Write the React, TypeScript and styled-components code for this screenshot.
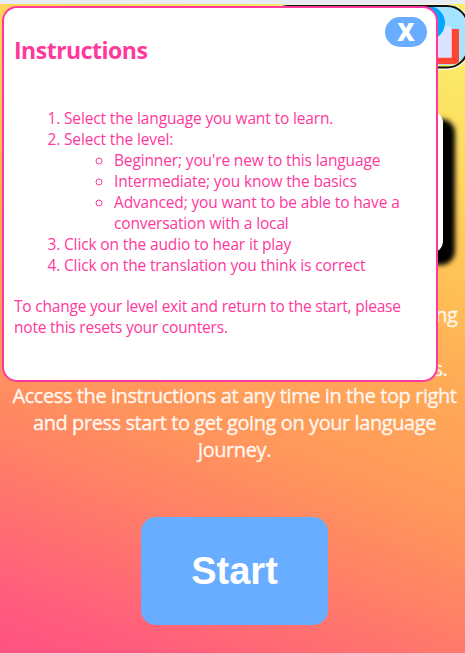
import React from "react";
import styled, { createGlobalStyle } from "styled-components";

const GlobalStyle = createGlobalStyle`
  *, *::before, *::after { box-sizing: border-box; }
  body { margin: 0; overflow: hidden; font-family: "Open Sans", "Noto Sans", sans-serif; }
`;

const Page = styled.div`
  position: relative;
  height: 653px;
  overflow: hidden;
  border-top: 4px solid #e8ecf3;
  background: linear-gradient(201deg, #f9ef6b 0%, #faea69 8%, #ffd55a 22%, #ffbf55 35.5%, #ffab57 46%, #ff9e59 57%, #ff955c 64%, #ff8066 75%, #ff7070 83%, #ff5e7c 92%, #ff5283 100%);
`;

const Header = styled.header`
  display: flex;
  justify-content: flex-end;
  height: 66px;
  margin-right: -5px;
`;

const Card = styled.div`
  width: 416px;
  height: 142px;
  margin: 41px 0 0 27px;
  border-radius: 12px;
  background: #fff;
  box-shadow: 10px 10px 5px 2px #000;
`;

const Intro = styled.p`
  margin: 48px 0 0;
  padding-left: 4px;
  text-align: center;
  white-space: nowrap;
  color: #fff8f2;
  font-size: 20px;
  line-height: 27px;
  letter-spacing: -0.42px;
  -webkit-text-stroke: 0.3px #fff8f2;
`;

const StartButton = styled.button`
  display: block;
  width: 187px;
  height: 108px;
  margin: 54px 0 0 141px;
  padding: 0;
  border: 0;
  border-radius: 15px;
  background: #68adff;
  color: #fff;
  font: bold 38px "Liberation Sans", Arial, sans-serif;
`;

const Dialog = styled.section`
  position: absolute;
  top: 2px;
  left: 2px;
  width: 436px;
  height: 376px;
  padding: 0 10px;
  border: 2px solid #ff389c;
  border-radius: 15px;
  background: #fff;
  color: #ff389c;
  font-size: 15.5px;
  line-height: 21px;
  letter-spacing: -0.14px;
  white-space: nowrap;
`;

const CloseButton = styled.button`
  position: absolute;
  top: 9px;
  right: 9px;
  width: 42px;
  height: 30px;
  padding: 0;
  border: 0;
  border-radius: 15px;
  background: #68adff;
  color: #fff;
  font: 800 24px/30px "Open Sans", sans-serif;
`;

const Title = styled.h2`
  margin: 26px 0 0;
  font-size: 23px;
  line-height: 32px;
  letter-spacing: -0.5px;
`;

const Steps = styled.ol`
  margin: 42px 0 0;
  padding-left: 50px;
`;

const Levels = styled.ul`
  margin: 0;
  padding-left: 50px;
`;

const Note = styled.p`
  margin: 20px 0 0;
  letter-spacing: -0.21px;
`;

const Badge = () => (
  <svg width="206" height="66" viewBox="0 0 206 66" aria-hidden="true">
    <defs>
      <clipPath id="badge-shape">
        <rect x="3" y="3" width="200" height="58" rx="18" />
      </clipPath>
    </defs>
    <rect x="2" y="1" width="203" height="64" rx="22" fill="#f9e766" stroke="#fff" strokeWidth="1.5" />
    <g clipPath="url(#badge-shape)">
      <rect width="206" height="66" fill="#a5e4ff" />
      <path d="M160 25h35v35h-35z" fill="#ff4635" />
      <path d="M160 22h27v31h-27z" fill="#dae3ff" />
      <path d="M187.5 25v28.5h-28" fill="none" stroke="#f3b8c4" />
      <circle cx="164" cy="19" r="17" fill="#00a7ff" />
    </g>
    <rect x="3" y="2" width="201" height="61.5" rx="21" fill="none" stroke="#111" strokeWidth="2" />
  </svg>
);

export default function App() {
  return (
    <>
      <GlobalStyle />
      <Page>
        <Header><Badge /></Header>
        <Card />
        <Intro>
          Welcome to the language app created for learning<br />
          a new language by listening to audio<br />
          and then choosing between the six translations.<br />
          Access the instructions at any time in the top right<br />
          and press start to get going on your language<br />
          journey.
        </Intro>
        <StartButton>Start</StartButton>
        <Dialog>
          <CloseButton>X</CloseButton>
          <Title>Instructions</Title>
          <Steps>
            <li>Select the language you want to learn.</li>
            <li>
              Select the level:
              <Levels>
                <li>Beginner; you're new to this language</li>
                <li>Intermediate; you know the basics</li>
                <li>Advanced; you want to be able to have a<br />conversation with a local</li>
              </Levels>
            </li>
            <li>Click on the audio to hear it play</li>
            <li>Click on the translation you think is correct</li>
          </Steps>
          <Note>
            To change your level exit and return to the start, please<br />
            note this resets your counters.
          </Note>
        </Dialog>
      </Page>
    </>
  );
}
